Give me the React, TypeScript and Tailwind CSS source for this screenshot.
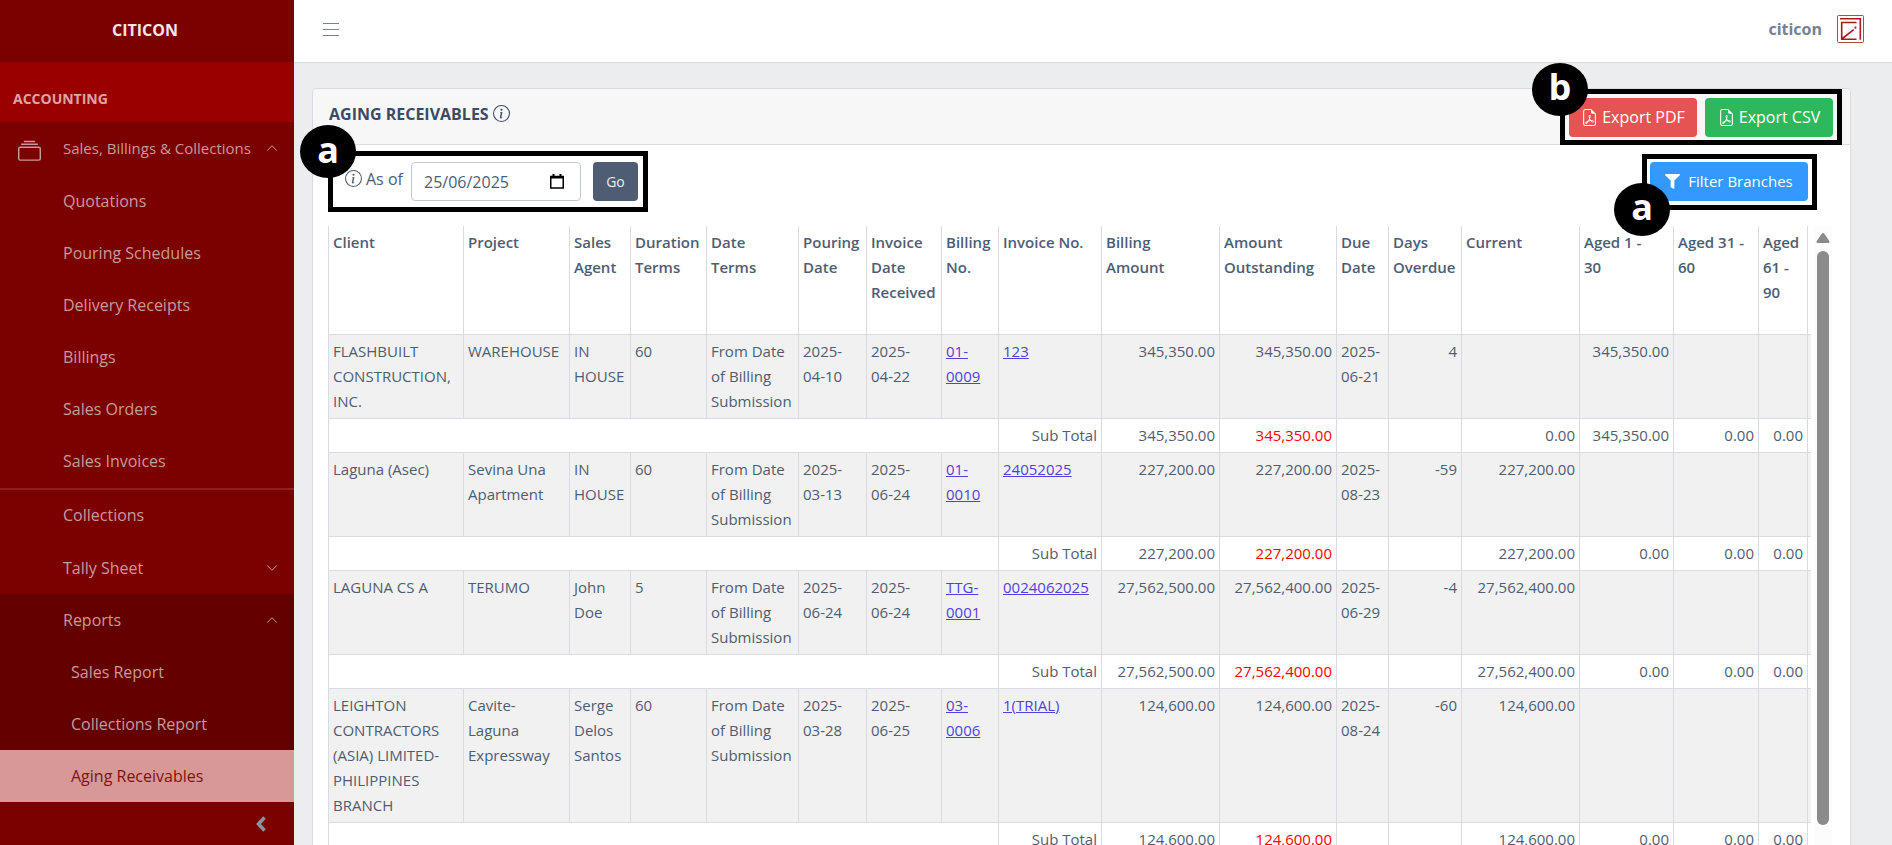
import type { ReactNode } from 'react'
import { BsChevronDown, BsChevronUp, BsCollection, BsFileEarmarkPdf, BsInfoCircle } from 'react-icons/bs'
import { FaFilter } from 'react-icons/fa'

type Receivable = {
  client: string
  project: string
  agent: string
  terms: string
  pouringDate: string
  receivedDate: string
  billingNo: string
  invoiceNo: string
  billed: string
  outstanding: string
  dueDate: string
  overdue: string
  current: string
  aged30: string
}

const receivables: Receivable[] = [
  {
    client: 'FLASHBUILT CONSTRUCTION, INC.',
    project: 'WAREHOUSE',
    agent: 'IN HOUSE',
    terms: '60',
    pouringDate: '2025-04-10',
    receivedDate: '2025-04-22',
    billingNo: '01-0009',
    invoiceNo: '123',
    billed: '345,350.00',
    outstanding: '345,350.00',
    dueDate: '2025-06-21',
    overdue: '4',
    current: '',
    aged30: '345,350.00',
  },
  {
    client: 'Laguna (Asec)',
    project: 'Sevina Una Apartment',
    agent: 'IN HOUSE',
    terms: '60',
    pouringDate: '2025-03-13',
    receivedDate: '2025-06-24',
    billingNo: '01-0010',
    invoiceNo: '24052025',
    billed: '227,200.00',
    outstanding: '227,200.00',
    dueDate: '2025-08-23',
    overdue: '-59',
    current: '227,200.00',
    aged30: '',
  },
  {
    client: 'LAGUNA CS A',
    project: 'TERUMO',
    agent: 'John Doe',
    terms: '5',
    pouringDate: '2025-06-24',
    receivedDate: '2025-06-24',
    billingNo: 'TTG-0001',
    invoiceNo: '0024062025',
    billed: '27,562,500.00',
    outstanding: '27,562,400.00',
    dueDate: '2025-06-29',
    overdue: '-4',
    current: '27,562,400.00',
    aged30: '',
  },
  {
    client: 'LEIGHTON CONTRACTORS (ASIA) LIMITED-PHILIPPINES BRANCH',
    project: 'Cavite-Laguna Expressway',
    agent: 'Serge Delos Santos',
    terms: '60',
    pouringDate: '2025-03-28',
    receivedDate: '2025-06-25',
    billingNo: '03-0006',
    invoiceNo: '1(TRIAL)',
    billed: '124,600.00',
    outstanding: '124,600.00',
    dueDate: '2025-08-24',
    overdue: '-60',
    current: '124,600.00',
    aged30: '',
  },
]

const columns = [
  { label: 'Client', width: 'w-[135px]' },
  { label: 'Project', width: 'w-[106px]' },
  { label: 'Sales Agent', width: 'w-[61px]' },
  { label: 'Duration Terms', width: 'w-[76px]' },
  { label: 'Date Terms', width: 'w-[92px]' },
  { label: 'Pouring Date', width: 'w-[68px]' },
  { label: 'Invoice Date Received', width: 'w-[75px]' },
  { label: 'Billing No.', width: 'w-[57px]' },
  { label: 'Invoice No.', width: 'w-[103px]' },
  { label: 'Billing\nAmount', width: 'w-[118px]' },
  { label: 'Amount Outstanding', width: 'w-[117px]' },
  { label: 'Due Date', width: 'w-[52px]' },
  { label: 'Days Overdue', width: 'w-[73px]' },
  { label: 'Current', width: 'w-[118px]' },
  { label: 'Aged 1 -\n30', width: 'w-[94px]' },
  { label: 'Aged 31 - 60', width: 'w-[85px]' },
  { label: 'Aged 61 - 90', width: 'w-[49px]' },
  { label: '', width: 'w-[80px]' },
]

const salesLinks = ['Quotations', 'Pouring Schedules', 'Delivery Receipts', 'Billings', 'Sales Orders', 'Sales Invoices']

function Callout({ letter, badge, className, children }: { letter: string; badge: string; className: string; children: ReactNode }) {
  return (
    <div className={`relative flex border-[5px] border-black ${className}`}>
      {children}
      <span
        className={`absolute flex h-[53px] w-14 items-center justify-center rounded-[50%] bg-black pb-1 text-4xl font-bold text-white ${badge}`}
      >
        {letter}
      </span>
    </div>
  )
}

function NavLink({ children, deep = false }: { children: ReactNode; deep?: boolean }) {
  return (
    <a href="#" className={`flex h-[52px] items-center ${deep ? 'pl-[71px]' : 'pb-0.5 pl-[63px]'}`}>
      {children}
    </a>
  )
}

function Sidebar() {
  return (
    <aside className="flex w-[294px] shrink-0 flex-col bg-[#7b0000] text-base text-[#ca9999]">
      <div className="flex h-[62px] items-center justify-center pb-0.5 pr-1 font-bold text-[#f2e6e6]">CITICON</div>
      <div className="flex h-[60px] items-center bg-[#990000] px-[13px] pt-3.5 text-sm font-bold text-[#dea3a3]">ACCOUNTING</div>
      <nav>
        <button className="flex h-[54px] w-full items-center pb-0.5 pl-[18px] pr-4 text-[15px]">
          <BsCollection className="mt-1.5 size-[23px]" />
          <span className="ml-[22px]">Sales, Billings &amp; Collections</span>
          <BsChevronUp className="ml-auto size-3" />
        </button>
        {salesLinks.map((label) => (
          <NavLink key={label}>{label}</NavLink>
        ))}
        <hr className="border-t-2 border-[#921f1f]" />
        <NavLink>Collections</NavLink>
        <button className="flex h-[52px] w-full items-center justify-between pl-[63px] pr-4">
          Tally Sheet
          <BsChevronDown className="size-3" />
        </button>
        <div className="bg-[#630000]">
          <button className="flex h-[52px] w-full items-center justify-between pl-[63px] pr-4">
            Reports
            <BsChevronUp className="size-3" />
          </button>
          <NavLink deep>Sales Report</NavLink>
          <NavLink deep>Collections Report</NavLink>
          <div className="bg-[#d89898] text-[#7b1414]">
            <NavLink deep>Aging Receivables</NavLink>
          </div>
        </div>
      </nav>
      <button aria-label="Minimize sidebar" className="flex flex-1 items-center justify-end pr-7 text-[#8a93a2]">
        <svg viewBox="0 0 10 16" className="h-4 w-2.5" fill="none" stroke="currentColor" strokeWidth="3.5">
          <path d="M8.5 1.5 2.5 8l6 6.5" />
        </svg>
      </button>
    </aside>
  )
}

function TopBar() {
  return (
    <header className="flex h-[63px] shrink-0 items-center justify-between border-b border-[#d8dbe0] bg-white pl-[29px] pr-7">
      <button aria-label="Toggle menu" className="pb-1">
        <svg viewBox="0 0 16 14" className="h-3.5 w-4" stroke="#768192" strokeWidth="1">
          <path d="M0 1.5h16M0 7.5h16M0 13.5h16" />
        </svg>
      </button>
      <div className="flex items-center gap-[15px] pb-1">
        <span className="text-base font-bold text-[#768192]">citicon</span>
        <svg viewBox="0 0 27 28" className="h-7 w-[27px]" fill="none" stroke="#a51c1c">
          <rect x="0.5" y="0.5" width="26" height="27" rx="1" strokeOpacity="0.8" />
          <path d="M3 3.7h20.3v21" strokeWidth="1.6" />
          <path d="M19.5 7.5H4.7v16.8h14.8M4.7 24 16.7 14.7" strokeWidth="1.6" />
          <circle cx="18.4" cy="12.7" r="1.1" fill="#a51c1c" stroke="none" />
        </svg>
      </div>
    </header>
  )
}

function ReceivableRows({ item }: { item: Receivable }) {
  return (
    <>
      <tr className="bg-[#f1f1f1]">
        <td>{item.client}</td>
        <td>{item.project}</td>
        <td>{item.agent}</td>
        <td>{item.terms}</td>
        <td>From Date of Billing Submission</td>
        <td>{item.pouringDate}</td>
        <td>
          <div className="w-14">{item.receivedDate}</div>
        </td>
        <td>
          <a href="#" className="text-[#5141e0] underline">{item.billingNo}</a>
        </td>
        <td>
          <a href="#" className="text-[#5141e0] underline">{item.invoiceNo}</a>
        </td>
        <td className="text-right">{item.billed}</td>
        <td className="text-right">{item.outstanding}</td>
        <td>{item.dueDate}</td>
        <td className="text-right">{item.overdue}</td>
        <td className="text-right">{item.current}</td>
        <td className="text-right">{item.aged30}</td>
        <td />
        <td />
        <td />
      </tr>
      <tr className="text-right">
        <td colSpan={8} />
        <td>Sub Total</td>
        <td>{item.billed}</td>
        <td className="text-[#ff0000]">{item.outstanding}</td>
        <td />
        <td />
        <td>{item.current || '0.00'}</td>
        <td>{item.aged30 || '0.00'}</td>
        <td>0.00</td>
        <td>0.00</td>
        <td />
      </tr>
    </>
  )
}

function ReceivablesTable() {
  return (
    <div className="mt-3.5 flex pr-[18px]">
      <div className="min-w-0 flex-1 overflow-hidden">
        <table className="w-[1559px] table-fixed border-collapse text-[15px] leading-[25px] text-[#4f5d73] [&_td]:border [&_td]:border-[#d8dbe0] [&_td]:px-1 [&_td]:py-1 [&_td]:align-top">
          <thead>
            <tr className="h-[108px]">
              {columns.map((column, index) => (
                <th
                  key={index}
                  className={`whitespace-pre-line border-x border-[#d8dbe0] px-1 pt-1 text-left align-top font-semibold ${column.width}`}
                >
                  {column.label}
                </th>
              ))}
            </tr>
          </thead>
          <tbody>
            {receivables.map((item) => (
              <ReceivableRows key={item.client} item={item} />
            ))}
          </tbody>
        </table>
      </div>
      {/* Scroll track */}
      <div className="ml-[3px] flex w-[18px] flex-col items-center bg-[#fcfcfc] pt-[7px]">
        <svg viewBox="0 0 14 10" className="h-2.5 w-3.5" fill="#8b8b8b">
          <path d="M7 0c.6 0 1 .3 1.3.8l5 7.2c.5.9.2 2-.8 2h-11c-1 0-1.300-1.100-.8-2l5-7.200C6 .3 6.400 0 7 0Z" />
        </svg>
        <div className="mt-2 h-[574px] w-3 rounded-full bg-[#8b8b8b]" />
      </div>
    </div>
  )
}

export default function App() {
  return (
    <div className="flex h-screen overflow-hidden bg-[#ebedef] font-['Open_Sans',sans-serif] text-[15px] text-[#4f5d73]">
      <Sidebar />
      <div className="flex min-w-0 flex-1 flex-col">
        <TopBar />
        <main className="ml-[18px] mr-[41px] mt-[25px] shrink-0 rounded-t border border-[#d8dbe0] bg-white">
          {/* Card header */}
          <div className="flex h-14 items-center justify-between rounded-t border-b border-[#d8dbe0] bg-[#f7f7f7] pl-4 pr-2">
            <h1 className="flex items-center gap-1 pb-1.5 text-base font-bold text-[#3c4b64]">
              AGING RECEIVABLES
              <BsInfoCircle className="size-[17px]" />
            </h1>
            <Callout letter="b" badge="-left-[33px] -top-[31px]" className="gap-2 px-1 pb-[3px] pt-1">
              <button className="flex h-[39px] w-32 items-center justify-center gap-1 rounded bg-[#e55353] text-base text-white">
                <BsFileEarmarkPdf className="size-[17px]" />
                Export PDF
              </button>
              <button className="flex h-[39px] w-32 items-center justify-center gap-1 rounded bg-[#2eb85c] text-base text-white">
                <BsFileEarmarkPdf className="size-[17px]" />
                Export CSV
              </button>
            </Callout>
          </div>

          <div className="pl-[15px] pt-1.5">
            <div className="flex items-center justify-between pr-[33px]">
              <Callout letter="a" badge="-left-[33px] -top-[31px]" className="items-center py-1.5 pl-3 pr-[5px]">
                <label htmlFor="as-of" className="flex w-[66px] items-center gap-1 whitespace-nowrap pb-1.5 text-base">
                  <BsInfoCircle className="size-[17px] shrink-0" />
                  As of
                </label>
                <input
                  id="as-of"
                  type="text"
                  defaultValue="25/06/2025"
                  className="h-[39px] w-[170px] rounded border border-[#c4c9d0] bg-white px-3 text-base"
                />
                <svg viewBox="0 0 14 15" className="-ml-[31px] mr-[17px] h-[15px] w-3.5" fill="none" stroke="black">
                  <path d="M.75 2.5h12.5v11.5H.75z" strokeWidth="1.5" />
                  <path d="M0 3.5h14M3.5 0v2M10.5 0v2" strokeWidth="2" />
                </svg>
                <button className="ml-3 h-[39px] w-[45px] rounded bg-[#4f5d73] text-sm text-[#ebedef]">Go</button>
              </Callout>
              <Callout letter="a" badge="-left-[33px] top-6" className="pb-1 pl-[3px] pr-1 pt-[3px]">
                <button className="flex h-[39px] w-[158px] items-center justify-center gap-2 rounded bg-[#3399ff] text-[15px] text-white">
                  <FaFilter className="size-[15px]" />
                  Filter Branches
                </button>
              </Callout>
            </div>
            <ReceivablesTable />
          </div>
        </main>
      </div>
    </div>
  )
}
